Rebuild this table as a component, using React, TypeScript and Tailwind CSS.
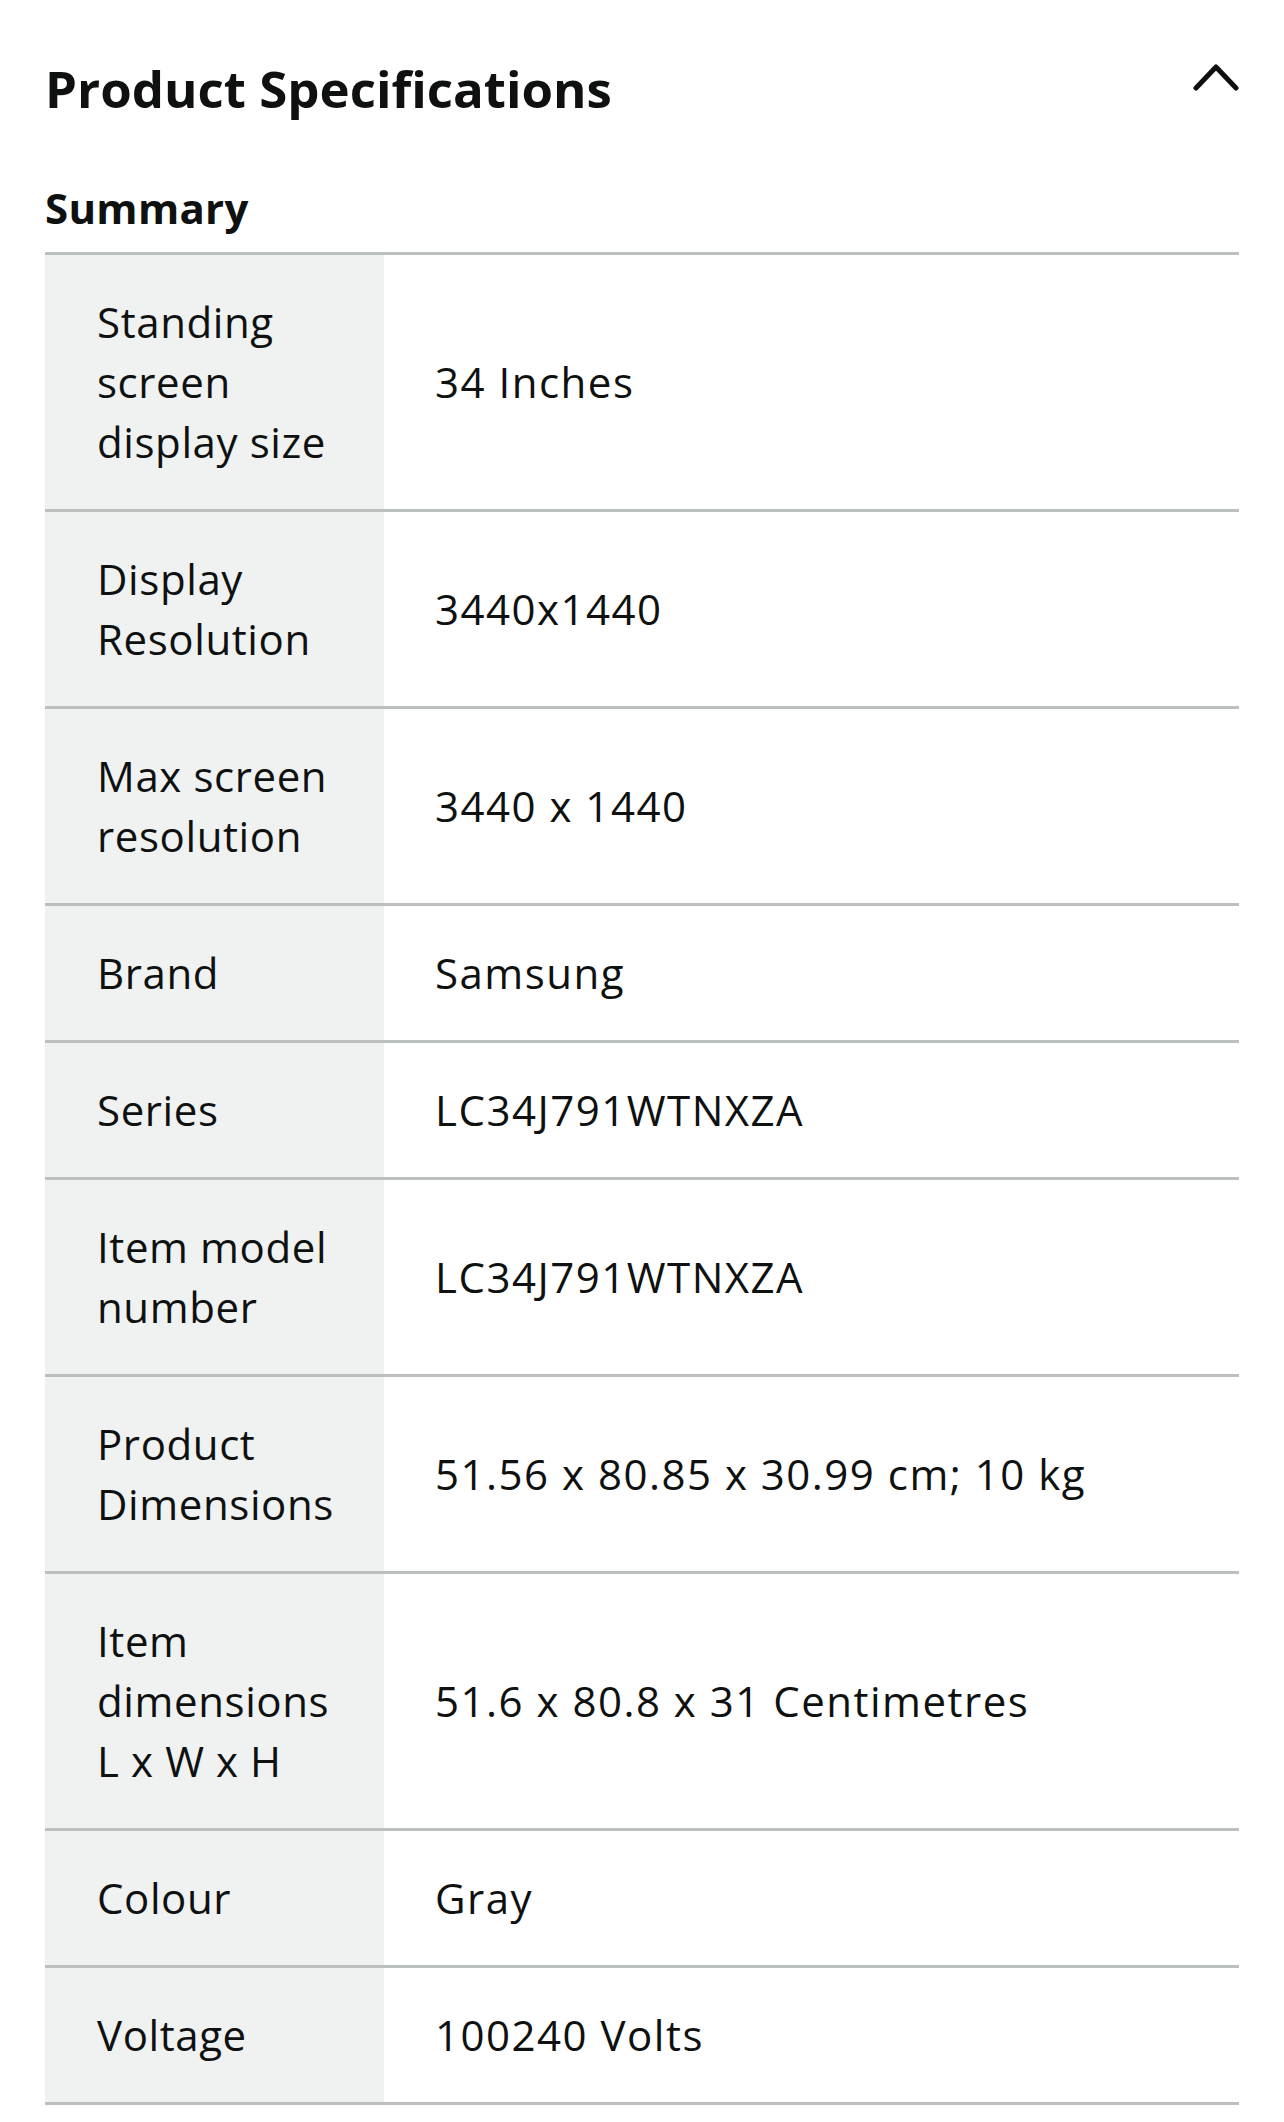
const specs: { label: string; value: string }[] = [
  { label: "Standing screen display size", value: "34 Inches" },
  { label: "Display Resolution", value: "3440x1440" },
  { label: "Max screen resolution", value: "3440 x 1440" },
  { label: "Brand", value: "Samsung" },
  { label: "Series", value: "LC34J791WTNXZA" },
  { label: "Item model number", value: "LC34J791WTNXZA" },
  { label: "Product Dimensions", value: "51.56 x 80.85 x 30.99 cm; 10 kg" },
  { label: "Item dimensions L x W x H", value: "51.6 x 80.8 x 31 Centimetres" },
  { label: "Colour", value: "Gray" },
  { label: "Voltage", value: "100240 Volts" },
];

const ChevronUp = () => (
  <svg width="46" height="30" viewBox="0 0 46 30" fill="none" className="mt-[9px]">
    <polyline
      points="3,26 23,5 43,26"
      stroke="#0f1111"
      strokeWidth="5"
      strokeLinecap="round"
      strokeLinejoin="round"
    />
  </svg>
);

const App = () => {
  return (
    <div
      className="w-full min-h-screen bg-white px-[45px] text-[#0f1111]"
      style={{ fontFamily: '"Open Sans", "Noto Sans", sans-serif' }}
    >
      <div className="flex justify-between items-start pt-[53px]">
        <h1 className="text-[51px] leading-[70px] font-bold">
          Product Specifications
        </h1>
        <ChevronUp />
      </div>

      <h2 className="text-[42px] leading-[57px] font-bold mt-[56px] tracking-[0.3px]">
        Summary
      </h2>

      <div className="mt-[16px] border-t-[3px] border-[#bbbfbf]">
        {specs.map((spec) => (
          <div key={spec.label} className="flex border-b-[3px] border-[#bbbfbf]">
            <div className="w-[339px] shrink-0 bg-[#f0f2f2] pl-[52px] pr-[40px] py-[37px] text-[42px] leading-[60px] tracking-[0.6px]">
              {spec.label}
            </div>
            <div className="flex-1 flex items-center pl-[51px] pr-4 text-[42px] leading-[60px] tracking-[1.5px]">
              {spec.value}
            </div>
          </div>
        ))}
      </div>
    </div>
  );
};

export default App;
